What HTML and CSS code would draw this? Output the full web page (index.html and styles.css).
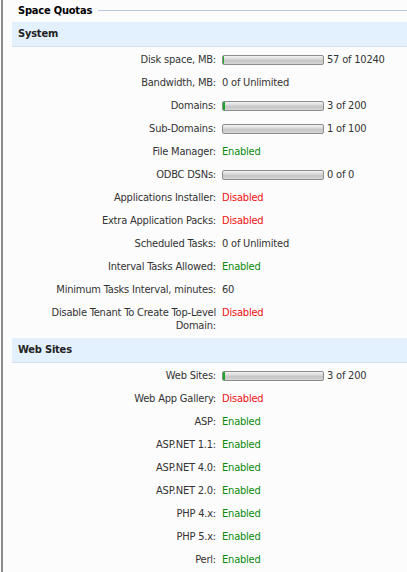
FILE: index.html
```html
<!DOCTYPE html>
<html>
<head>
<meta charset="utf-8">
<link rel="stylesheet" href="styles.css">
</head>
<body>
<div class="panel">
  <div class="legend"><span class="legend-title">Space Quotas</span><span class="legend-line"></span></div>

  <div class="group-head">System</div>
  <div class="rows">
    <div class="row"><div class="label">Disk space, MB:</div><div class="value"><span class="bar"><span class="fill" style="width:1px"></span></span>57 of 10240</div></div>
    <div class="row"><div class="label">Bandwidth, MB:</div><div class="value">0 of Unlimited</div></div>
    <div class="row"><div class="label">Domains:</div><div class="value"><span class="bar"><span class="fill" style="width:2px"></span></span>3 of 200</div></div>
    <div class="row"><div class="label">Sub-Domains:</div><div class="value"><span class="bar"></span>1 of 100</div></div>
    <div class="row"><div class="label">File Manager:</div><div class="value on">Enabled</div></div>
    <div class="row"><div class="label">ODBC DSNs:</div><div class="value"><span class="bar"></span>0 of 0</div></div>
    <div class="row"><div class="label">Applications Installer:</div><div class="value off">Disabled</div></div>
    <div class="row"><div class="label">Extra Application Packs:</div><div class="value off">Disabled</div></div>
    <div class="row"><div class="label">Scheduled Tasks:</div><div class="value">0 of Unlimited</div></div>
    <div class="row"><div class="label">Interval Tasks Allowed:</div><div class="value on">Enabled</div></div>
    <div class="row"><div class="label">Minimum Tasks Interval, minutes:</div><div class="value">60</div></div>
    <div class="row"><div class="label">Disable Tenant To Create Top-Level Domain:</div><div class="value off">Disabled</div></div>
  </div>

  <div class="group-head">Web Sites</div>
  <div class="rows">
    <div class="row"><div class="label">Web Sites:</div><div class="value"><span class="bar"><span class="fill" style="width:2px"></span></span>3 of 200</div></div>
    <div class="row"><div class="label">Web App Gallery:</div><div class="value off">Disabled</div></div>
    <div class="row"><div class="label">ASP:</div><div class="value on">Enabled</div></div>
    <div class="row"><div class="label">ASP.NET 1.1:</div><div class="value on">Enabled</div></div>
    <div class="row"><div class="label">ASP.NET 4.0:</div><div class="value on">Enabled</div></div>
    <div class="row"><div class="label">ASP.NET 2.0:</div><div class="value on">Enabled</div></div>
    <div class="row"><div class="label">PHP 4.x:</div><div class="value on">Enabled</div></div>
    <div class="row"><div class="label">PHP 5.x:</div><div class="value on">Enabled</div></div>
    <div class="row"><div class="label">Perl:</div><div class="value on">Enabled</div></div>
  </div>
</div>
</body>
</html>
```

FILE: styles.css
```css
html, body {
  margin: 0;
  padding: 0;
  background: #fcfcfc;
}
body {
  font-family: "DejaVu Sans Condensed", "Liberation Sans", Arial, sans-serif;
  font-size: 11px;
  letter-spacing: -0.2px;
  color: #333;
  height: 572px;
  overflow: hidden;
}
.panel {
  margin-left: 1px;
  border-left: 2px solid #8a8a8a;
  min-height: 572px;
  padding-left: 9px;
}
.legend {
  display: flex;
  align-items: center;
  height: 21px;
  padding-left: 6px;
}
.legend-title {
  font-weight: bold;
  color: #000;
}
.legend-line {
  flex: 1;
  height: 0;
  border-top: 1px solid #b9c9e4;
  margin-left: 6px;
  margin-top: -1px;
}
.group-head {
  background: #e3f0fd;
  border-bottom: 1px solid #d2dfee;
  height: 24px;
  line-height: 24px;
  padding-left: 6px;
  font-weight: bold;
  color: #222;
  margin-top: 1px;
}
.rows {
  padding: 1px 0 0;
}
.row {
  display: grid;
  grid-template-columns: 204px 1fr;
  column-gap: 6px;
  padding: 5px 0;
  line-height: 13px;
}
.label {
  text-align: right;
}
.value {
  display: flex;
  align-items: center;
  align-self: start;
  height: 13px;
}
.on { color: #0a8a0a; }
.off { color: #f01010; }
.bar {
  display: inline-block;
  box-sizing: border-box;
  width: 102px;
  height: 10px;
  border: 1px solid #8d8d8d;
  border-radius: 2px;
  background: linear-gradient(#f2f2f2 0%, #dcdcdc 35%, #c4c4c4 60%, #d8d8d8 100%);
  margin-right: 3px;
  overflow: hidden;
}
.fill {
  display: block;
  height: 100%;
  background: #1fa52a;
}
```
